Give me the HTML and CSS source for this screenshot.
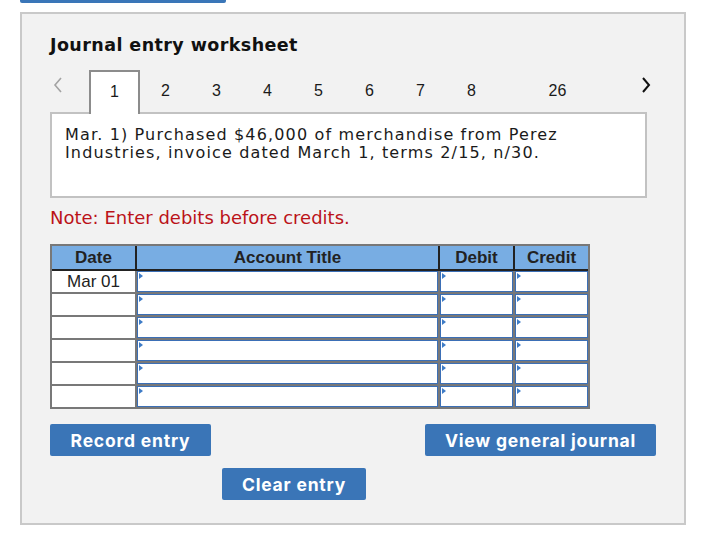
FILE: index.html
```html
<!DOCTYPE html>
<html>
<head>
<meta charset="utf-8">
<link rel="stylesheet" href="styles.css">
</head>
<body>
<div class="topbar"></div>
<div class="panel">
  <h1 class="title">Journal entry worksheet</h1>
  <div class="tabs">
    <span class="chev prev"><svg width="12" height="16" viewBox="0 0 12 16"><polyline points="9,1 3,8 9,15" fill="none" stroke="#a3a3a3" stroke-width="1.6"/></svg></span>
    <span class="tab active">1</span>
    <span class="tab">2</span>
    <span class="tab">3</span>
    <span class="tab">4</span>
    <span class="tab">5</span>
    <span class="tab">6</span>
    <span class="tab">7</span>
    <span class="tab">8</span>
    <span class="tab last">26</span>
    <span class="chev next"><svg width="12" height="16" viewBox="0 0 12 16"><polyline points="3,1 9,8 3,15" fill="none" stroke="#111" stroke-width="2"/></svg></span>
  </div>
  <div class="desc">Mar. 1) Purchased $46,000 of merchandise from Perez Industries, invoice dated March 1, terms 2/15, n/30.</div>
  <p class="note">Note: Enter debits before credits.</p>
  <div class="journal">
    <div class="head">
      <div class="hcell">Date</div>
      <div class="hcell">Account Title</div>
      <div class="hcell">Debit</div>
      <div class="hcell">Credit</div>
    </div>
    <div class="body">
      <div class="dcell">Mar 01</div><div class="inp"></div><div class="inp"></div><div class="inp"></div>
      <div class="dcell"></div><div class="inp"></div><div class="inp"></div><div class="inp"></div>
      <div class="dcell"></div><div class="inp"></div><div class="inp"></div><div class="inp"></div>
      <div class="dcell"></div><div class="inp"></div><div class="inp"></div><div class="inp"></div>
      <div class="dcell"></div><div class="inp"></div><div class="inp"></div><div class="inp"></div>
      <div class="dcell"></div><div class="inp"></div><div class="inp"></div><div class="inp"></div>
    </div>
  </div>
  <div class="btnrow">
    <span class="btn rec">Record entry</span>
    <span class="btn view">View general journal</span>
  </div>
  <div class="btnrow2">
    <span class="btn clear">Clear entry</span>
  </div>
</div>
</body>
</html>
```

FILE: styles.css
```css
html, body {
  margin: 0;
  padding: 0;
  background: #ffffff;
}
body {
  font-family: "Liberation Sans", Arial, sans-serif;
  color: #222;
}
.topbar {
  margin-left: 20px;
  width: 206px;
  height: 3px;
  background: #3a76b8;
  border-radius: 0 0 2px 2px;
}
.panel {
  margin: 9px 0 0 20px;
  width: 662px;
  height: 509px;
  border: 2px solid #c9c9c9;
  background: #f2f2f2;
  box-sizing: content-box;
  padding: 0;
  position: relative;
}
.title {
  margin: 19px 0 0 28px;
  font-family: "DejaVu Sans", Verdana, sans-serif;
  font-weight: bold;
  font-size: 17.5px;
  line-height: 24px;
  color: #111;
  letter-spacing: 0.42px;
}
.tabs {
  margin: 13px 0 0 28px;
  height: 42px;
  display: flex;
  align-items: center;
  position: relative;
  z-index: 2;
}
.chev {
  display: flex;
  align-items: center;
  height: 16px;
  margin-top: -12px;
}
.prev {
  width: 39px;
  padding-left: 2px;
  box-sizing: border-box;
}
.next {
  margin-left: 57px;
}
.tab {
  width: 51px;
  height: 42px;
  display: flex;
  align-items: center;
  justify-content: center;
  font-size: 16px;
  color: #1a1a1a;
  box-sizing: border-box;
}
.tab.active {
  background: #fff;
  border: 2px solid #8c8c8c;
  border-bottom: none;
  height: 44px;
  margin-top: 2px;
  padding-bottom: 2px;
}
.tab.last {
  margin-left: 35px;
}
.desc {
  margin: 0 0 0 28px;
  width: 597px;
  height: 86px;
  box-sizing: border-box;
  border: 2px solid #c2c2c2;
  background: #fff;
  padding: 12px 13px 0 13px;
  font-family: "DejaVu Sans", Verdana, sans-serif;
  font-size: 16px;
  line-height: 17.6px;
  letter-spacing: 1.15px;
  color: #1a1a1a;
}
.note {
  margin: 9px 0 0 28px;
  font-family: "DejaVu Sans", Verdana, sans-serif;
  font-size: 18px;
  line-height: 22px;
  color: #bb1219;
}
.journal {
  margin: 15px 0 0 28px;
  width: 540px;
  border: 2px solid #787878;
  box-sizing: border-box;
  background: #787878;
}
.head {
  display: grid;
  grid-template-columns: 83px 301px 73px 73px;
  column-gap: 2px;
  background: #222;
  padding-bottom: 2px;
}
.hcell {
  background: #78ade3;
  height: 23px;
  display: flex;
  align-items: center;
  justify-content: center;
  font-weight: bold;
  font-size: 17px;
  color: #222;
}
.body {
  display: grid;
  grid-template-columns: 83px 301px 73px 73px;
  grid-auto-rows: 21px;
  gap: 2px;
}
.dcell {
  background: #fff;
  display: flex;
  align-items: center;
  justify-content: center;
  font-size: 17px;
  color: #222;
}
.inp {
  background: #fff;
  border: 1px solid #3b6fb6;
  box-sizing: border-box;
  position: relative;
}
.inp::before {
  content: "";
  position: absolute;
  left: 1px;
  top: 1px;
  border-left: 4px solid #3d7bc6;
  border-top: 3px solid transparent;
  border-bottom: 3px solid transparent;
}
.btnrow {
  margin: 15px 0 0 28px;
  width: 606px;
  display: flex;
  justify-content: space-between;
}
.btnrow2 {
  margin: 12px 0 0 200px;
  display: flex;
}
.btn {
  display: flex;
  align-items: center;
  justify-content: center;
  background: #3a75b7;
  color: #fff;
  font-family: Inter, Roboto, "Liberation Sans", sans-serif;
  font-weight: bold;
  font-size: 17.5px;
  letter-spacing: 0.8px;
  border-radius: 2px;
  height: 32px;
}
.rec { width: 161px; }
.view { width: 231px; }
.clear { width: 144px; }
```
